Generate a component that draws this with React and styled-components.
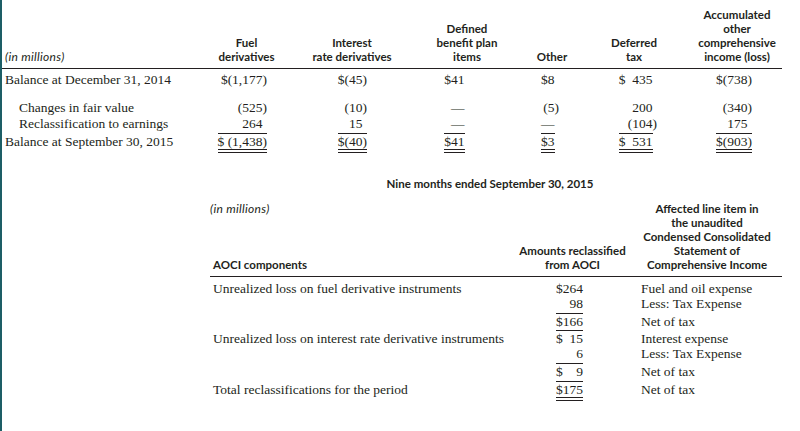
import React from 'react';
import styled, { createGlobalStyle } from 'styled-components';

const INK = '#231f20';
const SANS = "Lato, 'Open Sans', 'DejaVu Sans', sans-serif";
const SERIF = "'Liberation Serif', 'Times New Roman', serif";

const Global = createGlobalStyle`
  html, body { margin: 0; padding: 0; background: #fff; }
  body { width: 800px; height: 431px; overflow: hidden; }
`;

const Page = styled.div`
  box-sizing: border-box;
  width: 800px;
  height: 431px;
  border-left: 2px solid #1d5e66;
  padding-top: 8px;
  color: ${INK};
`;

/* ---------- Table 1 ---------- */
const COLS1 = '193px 103px 108px 122px 48px 116px 90px';

const Grid1 = styled.div`
  display: grid;
  grid-template-columns: ${COLS1};
  width: 780px;
`;

const HeadRow1 = styled(Grid1)`
  align-items: end;
  padding-bottom: 4px;
  border-bottom: 1px solid ${INK};
`;

const HeadCell = styled.div`
  font: 700 11.5px/14px ${SANS};
  text-align: center;
  white-space: nowrap;
`;

const Units = styled.div`
  font: italic 400 12px/14px ${SANS};
  letter-spacing: 0.3px;
  padding-left: ${p => p.$pl ?? 3}px;
  white-space: nowrap;
`;

const DataRow1 = styled(Grid1)`
  align-items: baseline;
  margin-top: ${p => p.$mt || 0}px;
  font: 400 13.5px/16px ${SERIF};
`;

const Label = styled.div`
  padding-left: ${p => (p.$indent ? 17 : 3)}px;
  white-space: nowrap;
`;

const Num = styled.div`
  text-align: right;
  padding-right: ${p => p.$pr}px;
  white-space: nowrap;
`;

const Ghost = styled.span`
  visibility: hidden;
`;

const Ruled = styled.span`
  display: inline-block;
  line-height: 15px;
  border-top: ${p => (p.$top ? `1px solid ${INK}` : 'none')};
  border-bottom: ${p => (p.$double ? `4px double ${INK}` : 'none')};
`;

/* ---------- Table 2 ---------- */
const COLS2 = '303px 119px 150px';

const Section2 = styled.div`
  margin-left: 208px;
  width: 572px;
`;

const Title = styled.div`
  margin-top: 24px;
  padding-right: 12px;
  font: 700 11.5px/14px ${SANS};
  text-align: center;
  white-space: nowrap;
`;

const Grid2 = styled.div`
  display: grid;
  grid-template-columns: ${COLS2};
`;

const HeadRow2 = styled(Grid2)`
  margin-top: 11px;
  padding-bottom: 4px;
  border-bottom: 1px solid ${INK};
`;

const HeadStack = styled.div`
  display: flex;
  flex-direction: column;
  justify-content: space-between;
`;

const HeadBottom = styled.div`
  display: flex;
  flex-direction: column;
  justify-content: flex-end;
  font: 700 11.5px/14px ${SANS};
  text-align: ${p => p.$align || 'center'};
  padding-left: ${p => p.$pl || 0}px;
  white-space: nowrap;
`;

const DataRow2 = styled(Grid2)`
  align-items: baseline;
  margin-top: ${p => p.$mt || 0}px;
  font: 400 13.5px/15px ${SERIF};
`;

const Desc = styled.div`
  padding-left: 9px;
  white-space: nowrap;
`;

/* ---------- data ---------- */
const PR1 = [31, 39, 59, 17, 35, 30];

const rows1 = [
  { label: 'Balance at December 31, 2014', mt: 3, vals: ['$(1,177)', '$(45)', '$41', '$8', '$\u2007435', '$(738)'] },
  { label: 'Changes in fair value', indent: true, mt: 12, vals: ['(525)', '(10)', '—', '(5)', '200', '(340)'] },
  { label: 'Reclassification to earnings', indent: true, vals: ['264', '15', '—', '—', '(104)', '175'] },
  { label: 'Balance at September 30, 2015', mt: 1, total: true, vals: ['$\u00a0(1,438)', '$(40)', '$41', '$3', '$\u2007531', '$(903)'] },
];

const rows2 = [
  { label: 'Unrealized loss on fuel derivative instruments', amt: '$264', desc: 'Fuel and oil expense', mt: 4 },
  { label: '', amt: '98', desc: 'Less: Tax Expense' },
  { label: '', amt: '$166', desc: 'Net of tax', mt: 2, top: true },
  { label: 'Unrealized loss on interest rate derivative instruments', amt: '$\u200715', desc: 'Interest expense', mt: 1, top: true },
  { label: '', amt: '6', desc: 'Less: Tax Expense' },
  { label: '', amt: '$\u2007\u20079', desc: 'Net of tax', mt: 2, top: true },
  { label: 'Total reclassifications for the period', amt: '$175', desc: 'Net of tax', mt: 2, top: true, double: true },
];

const Value = ({ v, total }) => {
  const paren = v.endsWith(')');
  return (
    <>
      {total ? <Ruled $top $double>{v}</Ruled> : v}
      {!paren && <Ghost>)</Ghost>}
    </>
  );
};

export default function App() {
  return (
    <>
      <Global />
      <Page>
        <HeadRow1>
          <Units>(in millions)</Units>
          <HeadCell>Fuel<br />derivatives</HeadCell>
          <HeadCell>Interest<br />rate derivatives</HeadCell>
          <HeadCell>Defined<br />benefit plan<br />items</HeadCell>
          <HeadCell>Other</HeadCell>
          <HeadCell>Deferred<br />tax</HeadCell>
          <HeadCell>Accumulated<br />other<br />comprehensive<br />income (loss)</HeadCell>
        </HeadRow1>

        {rows1.map((r, i) => (
          <DataRow1 key={i} $mt={r.mt}>
            <Label $indent={r.indent}>{r.label}</Label>
            {r.vals.map((v, j) => (
              <Num key={j} $pr={PR1[j]}>
                <Value v={v} total={r.total} />
              </Num>
            ))}
          </DataRow1>
        ))}

        <Section2>
          <Title>Nine months ended September 30, 2015</Title>
          <HeadRow2>
            <HeadStack>
              <Units $pl={0}>(in millions)</Units>
              <HeadBottom $align="left" $pl={3}>AOCI components</HeadBottom>
            </HeadStack>
            <HeadBottom>Amounts reclassified<br />from AOCI</HeadBottom>
            <HeadBottom>
              Affected line item in<br />the unaudited<br />Condensed Consolidated<br />Statement of<br />Comprehensive Income
            </HeadBottom>
          </HeadRow2>

          {rows2.map((r, i) => (
            <DataRow2 key={i} $mt={r.mt}>
              <Label>{r.label}</Label>
              <Num $pr={49}>
                {r.top ? <Ruled $top $double={r.double}>{r.amt}</Ruled> : r.amt}
              </Num>
              <Desc>{r.desc}</Desc>
            </DataRow2>
          ))}
        </Section2>
      </Page>
    </>
  );
}
